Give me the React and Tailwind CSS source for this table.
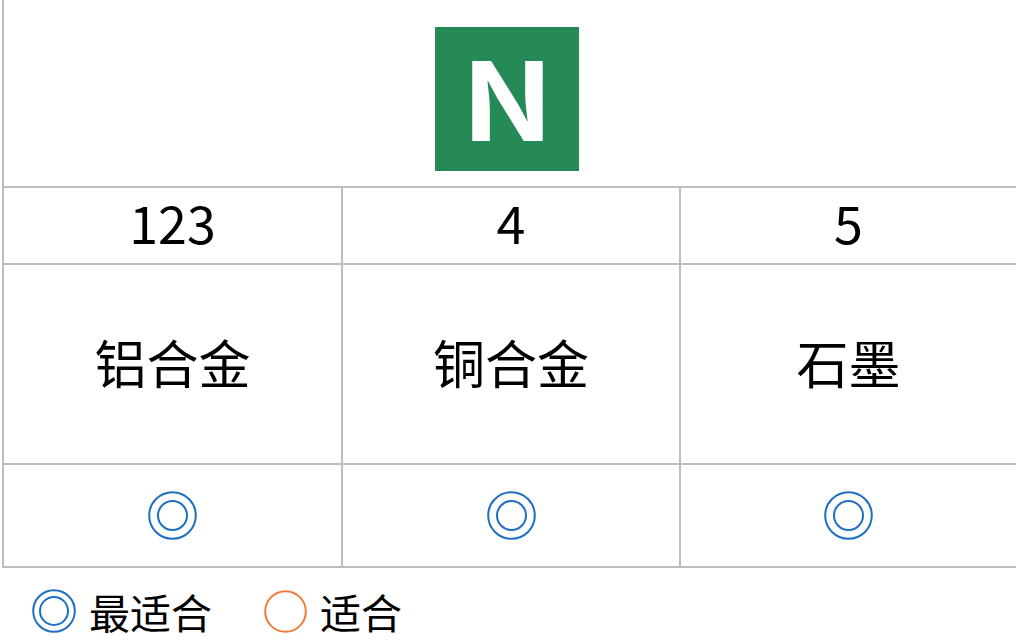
import React from 'react';

const line = 'border-[#bdbdbd]';

function DoubleRing({ size = 49, inner = 31, color = '#1f6fc0' }) {
  const c = size / 2;
  return (
    <svg width={size} height={size} viewBox={`0 0 ${size} ${size}`}>
      <circle cx={c} cy={c} r={c - 1.2} fill="none" stroke={color} strokeWidth="2" />
      <circle cx={c} cy={c} r={inner / 2 - 1} fill="none" stroke={color} strokeWidth="2" />
    </svg>
  );
}

function Ring({ size = 43, color = '#f07b3a' }) {
  const c = size / 2;
  return (
    <svg width={size} height={size} viewBox={`0 0 ${size} ${size}`}>
      <circle cx={c} cy={c} r={c - 1.2} fill="none" stroke={color} strokeWidth="2" />
    </svg>
  );
}

const materials = [
  { code: '123', name: '铝合金' },
  { code: '4', name: '铜合金' },
  { code: '5', name: '石墨' },
];

export default function App() {
  return (
    <div
      className="w-[1022px] h-[641px] bg-white text-black overflow-hidden"
      style={{ fontFamily: '"Noto Sans CJK SC", "Noto Sans", sans-serif' }}
    >
      <div className={`ml-[2px] w-[1014px] border-l-2 ${line}`}>
        {/* logo row */}
        <div className={`h-[188px] flex pl-[431px] pt-[27px] border-b-2 ${line}`}>
          <div className="w-[144px] h-[144px] bg-[#268a57] flex items-center justify-center">
            <span className="text-white text-[108px] font-bold leading-none inline-block scale-x-[1.15] -translate-y-[5px]">N</span>
          </div>
        </div>

        {/* codes */}
        <div className={`grid grid-cols-[339px_338px_335px] h-[77px] border-b-2 ${line}`}>
          {materials.map((m, i) => (
            <div
              key={m.code}
              className={`flex items-center justify-center pb-[7px] text-[52px] leading-none ${i < 2 ? `border-r-2 ${line}` : ''}`}
            >
              {m.code}
            </div>
          ))}
        </div>

        {/* names */}
        <div className={`grid grid-cols-[339px_338px_335px] h-[200px] border-b-2 ${line}`}>
          {materials.map((m, i) => (
            <div
              key={m.name}
              className={`flex items-center justify-center pb-[4px] text-[52px] leading-none ${i < 2 ? `border-r-2 ${line}` : ''}`}
            >
              {m.name}
            </div>
          ))}
        </div>

        {/* rating */}
        <div className={`grid grid-cols-[339px_338px_335px] h-[103px] border-b-2 ${line}`}>
          {materials.map((m, i) => (
            <div
              key={m.code}
              className={`flex items-center justify-center ${i < 2 ? `border-r-2 ${line}` : ''}`}
            >
              <DoubleRing />
            </div>
          ))}
        </div>
      </div>

      {/* legend */}
      <div className="flex items-center h-[84px] pl-[32px] pt-[2px] text-[41px] leading-none">
        <DoubleRing size={44} inner={30} />
        <span className="ml-[13px]">最适合</span>
        <span className="ml-[52px]"><Ring size={43} /></span>
        <span className="ml-[13px]">适合</span>
      </div>
    </div>
  );
}
